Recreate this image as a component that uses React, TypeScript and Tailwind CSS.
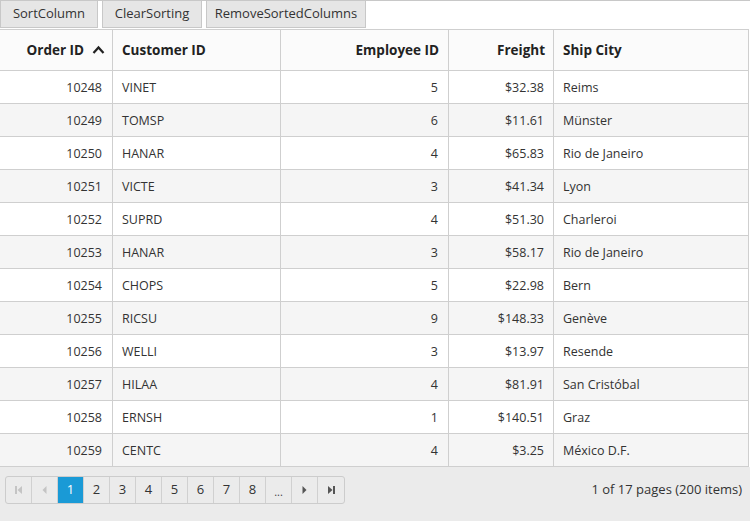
import type { ReactNode } from 'react';

interface Order {
  id: number;
  customer: string;
  employee: number;
  freight: string;
  city: string;
}

const ORDERS: Order[] = [
  { id: 10248, customer: 'VINET', employee: 5, freight: '$32.38', city: 'Reims' },
  { id: 10249, customer: 'TOMSP', employee: 6, freight: '$11.61', city: 'Münster' },
  { id: 10250, customer: 'HANAR', employee: 4, freight: '$65.83', city: 'Rio de Janeiro' },
  { id: 10251, customer: 'VICTE', employee: 3, freight: '$41.34', city: 'Lyon' },
  { id: 10252, customer: 'SUPRD', employee: 4, freight: '$51.30', city: 'Charleroi' },
  { id: 10253, customer: 'HANAR', employee: 3, freight: '$58.17', city: 'Rio de Janeiro' },
  { id: 10254, customer: 'CHOPS', employee: 5, freight: '$22.98', city: 'Bern' },
  { id: 10255, customer: 'RICSU', employee: 9, freight: '$148.33', city: 'Genève' },
  { id: 10256, customer: 'WELLI', employee: 3, freight: '$13.97', city: 'Resende' },
  { id: 10257, customer: 'HILAA', employee: 4, freight: '$81.91', city: 'San Cristóbal' },
  { id: 10258, customer: 'ERNSH', employee: 1, freight: '$140.51', city: 'Graz' },
  { id: 10259, customer: 'CENTC', employee: 4, freight: '$3.25', city: 'México D.F.' },
];

const FONT = "font-['Segoe_UI','Open_Sans',sans-serif]";

function ToolButton({ label, width }: { label: string; width: string }) {
  return (
    <button
      className={`h-[27px] ${width} bg-[#e6e6e6] border border-[#c8c8c8] border-t-0 text-[13px] text-[#333] flex items-center justify-center`}
    >
      {label}
    </button>
  );
}

function PagerCell({ children, active, last }: { children: ReactNode; active?: boolean; last?: boolean }) {
  return (
    <div
      className={`w-[26px] h-full flex items-center justify-center text-[13px] ${
        last ? '' : 'border-r border-[#d0d0d0]'
      } ${active ? 'bg-[#1a9ad6] text-white' : 'text-[#333]'}`}
    >
      {children}
    </div>
  );
}

export default function App() {
  return (
    <div className={`w-[750px] h-[521px] bg-white flex flex-col ${FONT}`}>
      {/* Toolbar */}
      <div className="flex gap-[4px] border-t border-[#c8c8c8] h-[29px]">
        <ToolButton label="SortColumn" width="w-[98px]" />
        <ToolButton label="ClearSorting" width="w-[100px]" />
        <ToolButton label="RemoveSortedColumns" width="w-[160px]" />
      </div>

      {/* Grid */}
      <div className="w-[749px] border-r border-[#cfcfcf]">
        {/* Header */}
        <div className="flex h-[42px] border-t border-b border-[#cfcfcf] bg-[#fbfbfb] text-[13.5px] font-bold text-[#222]">
          <div className="w-[113px] border-r border-[#cfcfcf] flex items-center justify-end pr-[7px] gap-[8px]">
            <span>Order ID</span>
            <svg width="13" height="10" viewBox="0 0 13 10">
              <path d="M1.5 8 L6.5 2.5 L11.5 8" fill="none" stroke="#222" strokeWidth="2.2" />
            </svg>
          </div>
          <div className="w-[168px] border-r border-[#cfcfcf] flex items-center pl-[9px]">Customer ID</div>
          <div className="w-[168px] border-r border-[#cfcfcf] flex items-center justify-end pr-[9px]">Employee ID</div>
          <div className="w-[105px] border-r border-[#cfcfcf] flex items-center justify-end pr-[8px]">Freight</div>
          <div className="w-[194px] flex items-center pl-[9px]">Ship City</div>
        </div>

        {/* Rows */}
        {ORDERS.map((o, i) => (
          <div
            key={o.id}
            className={`flex h-[33px] pt-[2px] border-b border-[#cfcfcf] text-[12.5px] text-[#333] ${
              i % 2 === 1 ? 'bg-[#f5f5f5]' : 'bg-white'
            }`}
          >
            <div className="w-[113px] border-r border-[#cfcfcf] -mt-[2px] pt-[2px] flex items-center justify-end pr-[10px]">{o.id}</div>
            <div className="w-[168px] border-r border-[#cfcfcf] -mt-[2px] pt-[2px] flex items-center pl-[9px]">{o.customer}</div>
            <div className="w-[168px] border-r border-[#cfcfcf] -mt-[2px] pt-[2px] flex items-center justify-end pr-[10px]">{o.employee}</div>
            <div className="w-[105px] border-r border-[#cfcfcf] -mt-[2px] pt-[2px] flex items-center justify-end pr-[9px]">{o.freight}</div>
            <div className="w-[194px] -mt-[2px] pt-[2px] flex items-center pl-[9px]">{o.city}</div>
          </div>
        ))}
      </div>

      {/* Pager */}
      <div className="flex-1 bg-[#ebebeb] flex items-start justify-between pl-[5px] pr-[8px] pt-[9px]">
        <div className="flex h-[28px] border border-[#cccccc] rounded-[3px] overflow-hidden bg-[#ebebeb]">
          <PagerCell>
            <svg width="8" height="8" viewBox="0 0 8 8">
              <rect x="0" y="0" width="2" height="8" fill="#c4c4c4" />
              <path d="M7 0 L2.5 4 L7 8 Z" fill="#c4c4c4" />
            </svg>
          </PagerCell>
          <PagerCell>
            <svg width="5" height="8" viewBox="0 0 5 8">
              <path d="M4.5 0 L0.5 4 L4.5 8 Z" fill="#c4c4c4" />
            </svg>
          </PagerCell>
          <PagerCell active>1</PagerCell>
          {[2, 3, 4, 5, 6, 7, 8].map((n) => (
            <PagerCell key={n}>{n}</PagerCell>
          ))}
          <PagerCell>
            <span className="text-[11px] text-[#444] pt-[4px]">...</span>
          </PagerCell>
          <PagerCell>
            <svg width="5" height="8" viewBox="0 0 5 8">
              <path d="M0.5 0 L4.5 4 L0.5 8 Z" fill="#555" />
            </svg>
          </PagerCell>
          <PagerCell last>
            <svg width="8" height="8" viewBox="0 0 8 8">
              <path d="M1 0 L5.5 4 L1 8 Z" fill="#555" />
              <rect x="6" y="0" width="2" height="8" fill="#555" />
            </svg>
          </PagerCell>
        </div>
        <div className="h-[28px] flex items-center text-[13px] text-[#333]">1 of 17 pages (200 items)</div>
      </div>
    </div>
  );
}
